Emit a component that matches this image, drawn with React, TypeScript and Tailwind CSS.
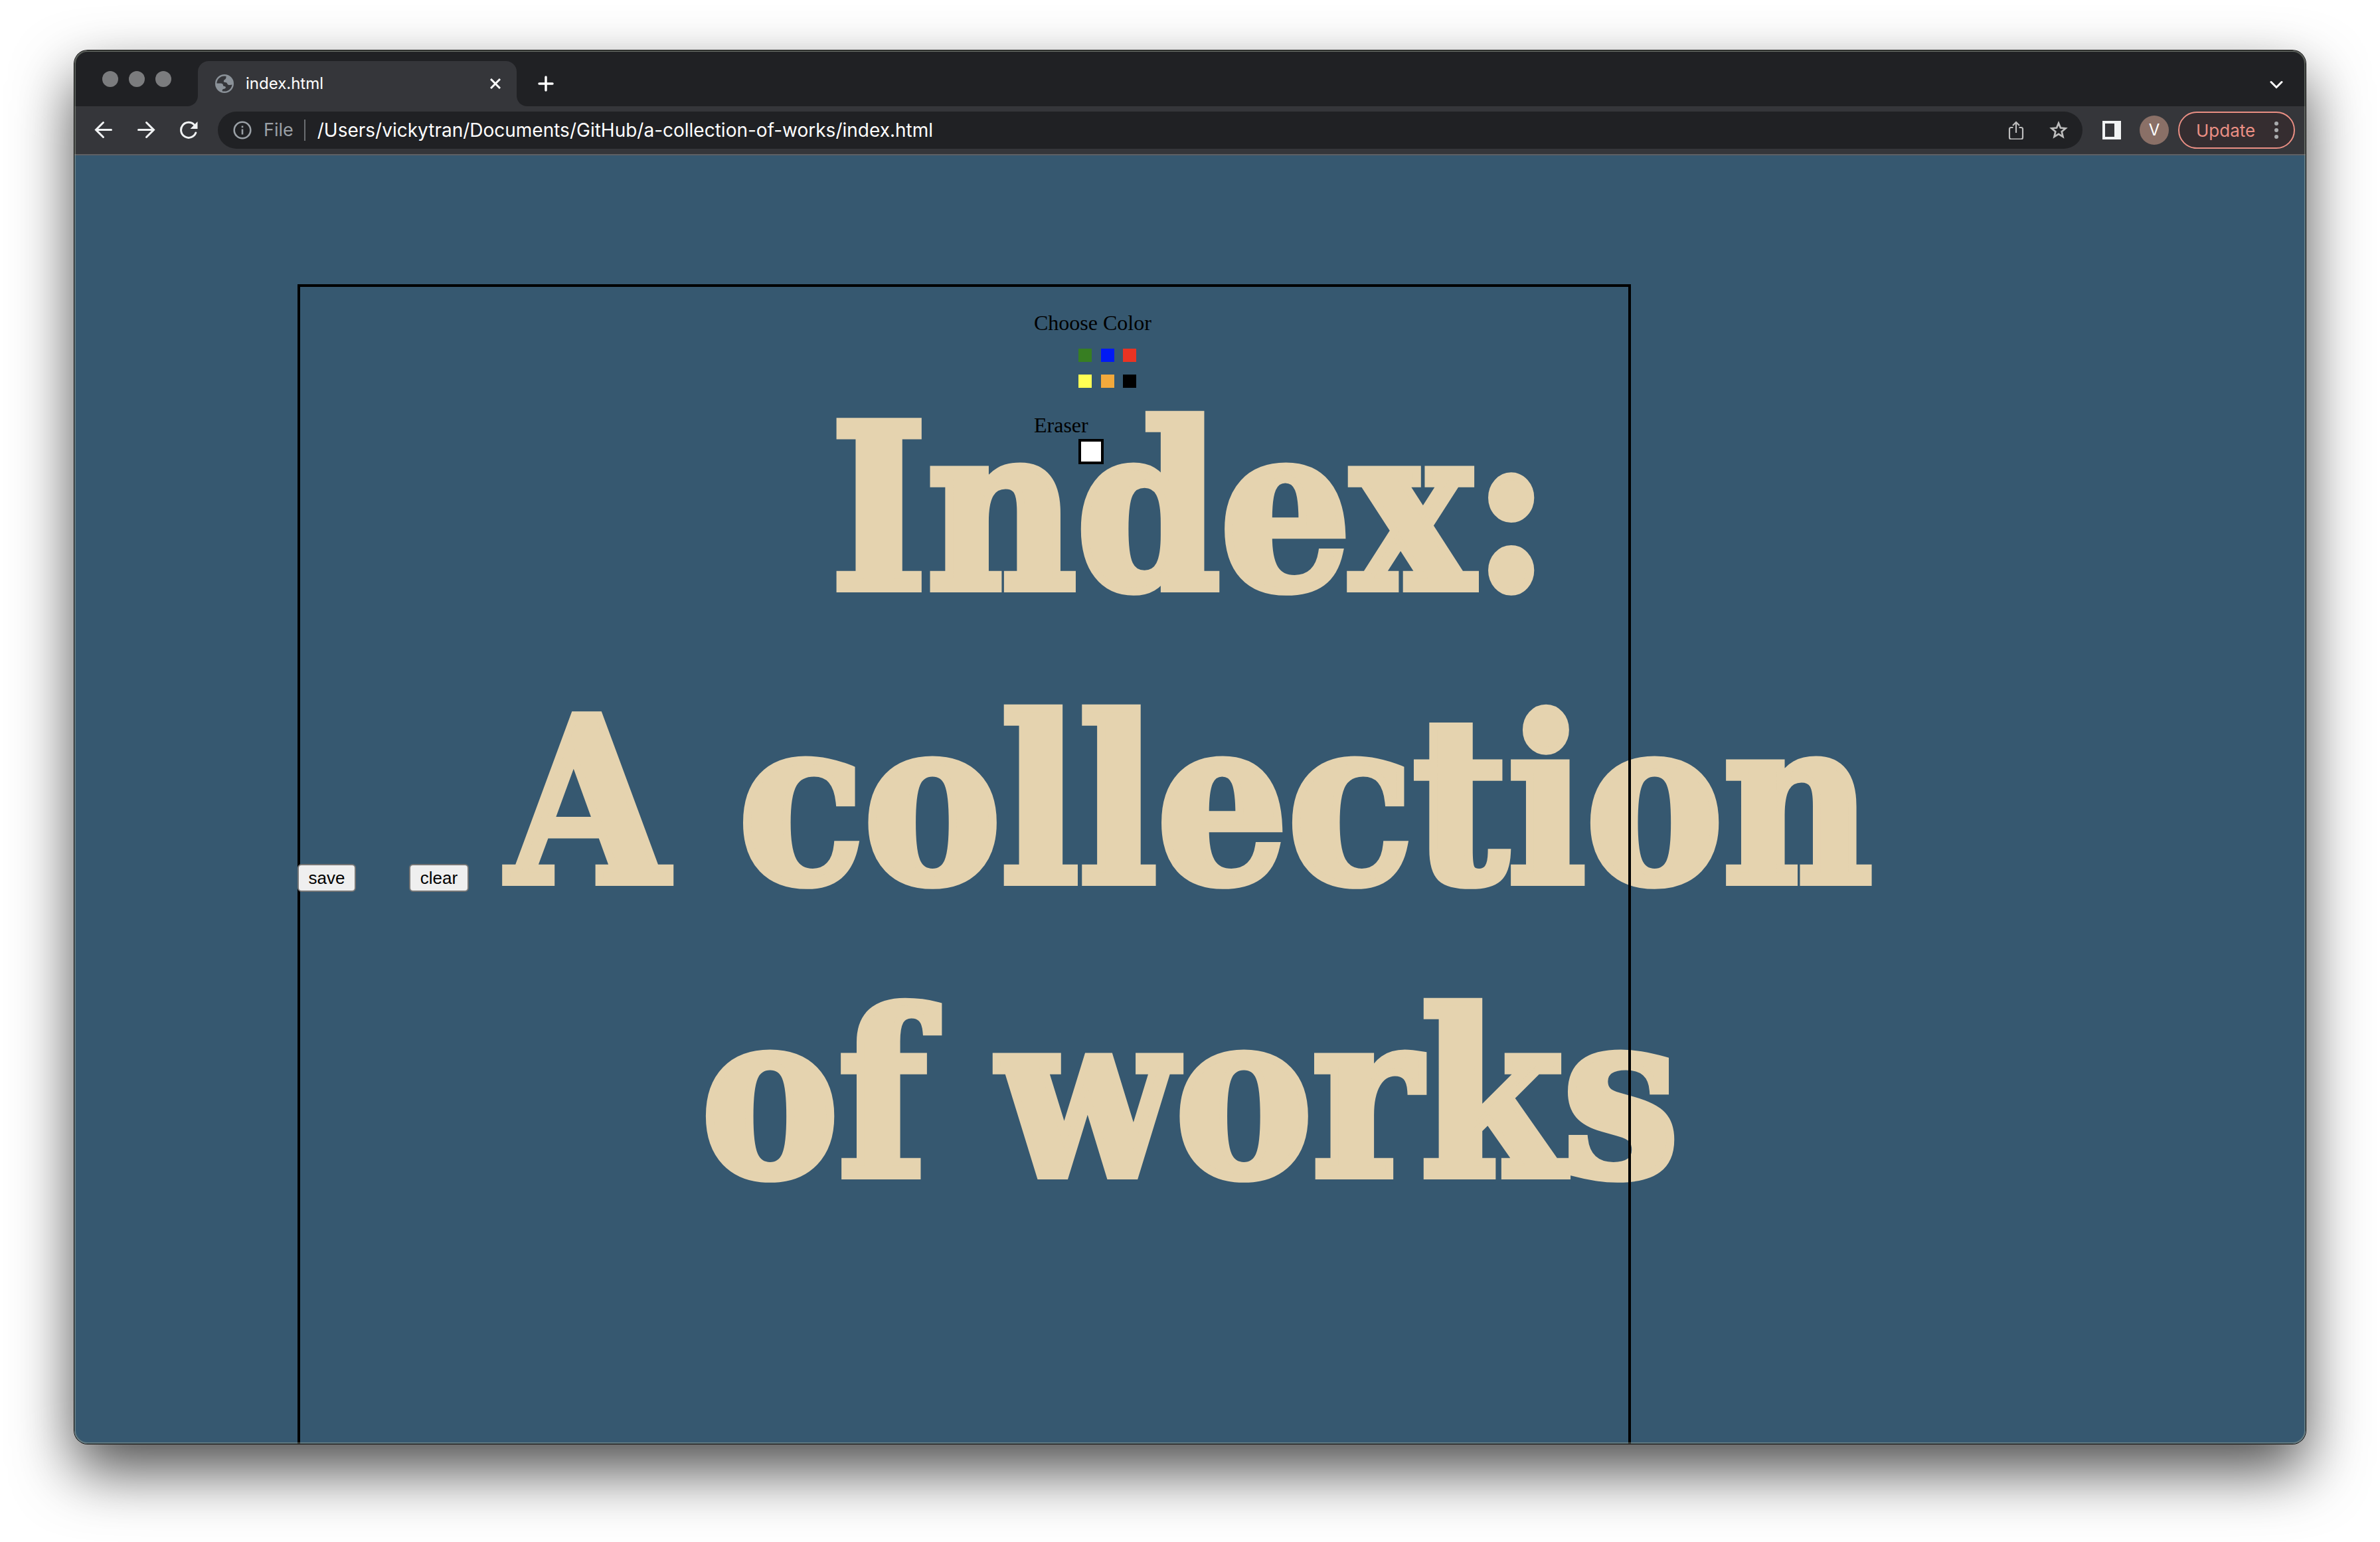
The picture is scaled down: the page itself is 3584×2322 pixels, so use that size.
import React from "react";

const swatches = [
  { name: "green", cls: "bg-[#377e22]" },
  { name: "blue", cls: "bg-[#001af5]" },
  { name: "red", cls: "bg-[#ea3323]" },
  { name: "yellow", cls: "bg-[#ffff54]" },
  { name: "orange", cls: "bg-[#f2a93c]" },
  { name: "black", cls: "bg-black" },
];

function GlobeIcon() {
  return (
    <svg viewBox="0 0 28 28" className="size-7 shrink-0" fill="#8b9299" aria-hidden="true">
      <circle cx="14" cy="14" r="12.8" fill="none" stroke="#8b9299" strokeWidth="2.4" />
      <path d="M16.500 2.500C24 3.500 27 9 26.500 15.500L23.500 15.800C21.500 16.500 18.500 16 18 13.500C17.800 12 15.500 12.500 13.800 11.800C12.300 11.200 12.600 9 14 8.200C15.500 7.300 16.800 6.500 16.500 2.500z" />
      <path d="M1.500 13.500H8.500C10.500 13.500 12 14.800 12 16.500C12 17.500 12.800 17.800 14.500 17.900C16.200 18.100 16.400 20.500 15 21.300C13.500 22.100 11.200 21.800 10.800 23.500L10.500 26C5 24.500 1.500 19.500 1.500 13.500z" />
    </svg>
  );
}

function TabStrip() {
  return (
    <header className="flex h-[84px] items-end bg-[#202124]">
      <div className="flex h-[84px] items-center gap-4 pt-0.5 pr-6 pl-[42px]">
        <span className="size-6 rounded-full bg-[#7b7c7e]" />
        <span className="size-6 rounded-full bg-[#7b7c7e]" />
        <span className="size-6 rounded-full bg-[#7b7c7e]" />
      </div>
      <div className="flex items-end">
        <svg viewBox="0 0 16 16" className="size-4" aria-hidden="true">
          <path d="M16 0v16H0C9 16 16 9 16 0z" fill="#35363a" />
        </svg>
        <div className="flex h-[68px] w-[480px] items-center rounded-t-2xl bg-[#35363a] pr-6 pl-[26px]">
          <GlobeIcon />
          <span className="ml-[18px] flex-1 text-2xl text-white">index.html</span>
          <button aria-label="Close tab" className="py-2">
            <svg viewBox="0 0 16 16" className="size-4" fill="none" stroke="#fff" strokeWidth="3">
              <path d="M1 1l14 14M15 1L1 15" />
            </svg>
          </button>
        </div>
        <svg viewBox="0 0 16 16" className="size-4" aria-hidden="true">
          <path d="M0 0v16h16C7 16 0 9 0 0z" fill="#35363a" />
        </svg>
      </div>
      <button aria-label="New tab" className="mb-[22px] ml-4">
        <svg viewBox="0 0 24 24" className="size-6" fill="none" stroke="#fff" strokeWidth="3.500" strokeLinecap="round">
          <path d="M12 2v20M2 12h20" />
        </svg>
      </button>
      <button aria-label="Search tabs" className="mr-[34px] mb-[23px] ml-auto">
        <svg viewBox="0 0 20 20" className="size-5" fill="none" stroke="#fff" strokeWidth="3" strokeLinecap="round">
          <path d="M2 6.500l8 8 8-8" />
        </svg>
      </button>
    </header>
  );
}

function Toolbar() {
  return (
    <nav className="flex h-[74px] items-center border-b-2 border-[#5e5f63] bg-[#35363a] pr-4 pl-[30px]">
      <div className="flex items-center gap-9">
        <button aria-label="Back">
          <svg viewBox="0 0 28 28" className="size-7" fill="none" stroke="#f1f3f4" strokeWidth="3" strokeLinecap="round">
            <path d="M25.500 13.500H3M13.500 2.500L2.500 13.500 13.500 24.500" />
          </svg>
        </button>
        <button aria-label="Forward">
          <svg viewBox="0 0 28 28" className="size-7" fill="none" stroke="#f1f3f4" strokeWidth="3" strokeLinecap="round">
            <path d="M2.500 13.500h22.500M14.500 2.500l11 11-11 11" />
          </svg>
        </button>
        <button aria-label="Reload">
          <svg viewBox="0 0 28 28" className="size-7" fill="none" stroke="#f1f3f4" strokeWidth="3" strokeLinecap="round">
            <path d="M24.800 18A11.500 11.500 0 1 1 22.500 6" />
            <path d="M27.500 1v11h-11z" fill="#f1f3f4" stroke="none" />
          </svg>
        </button>
      </div>
      <div className="ml-[30px] flex h-14 flex-1 items-center rounded-full bg-[#202124] pr-[22px] pl-[23px]">
        <svg viewBox="0 0 28 28" className="size-7 shrink-0" fill="none" stroke="#9aa0a6" strokeWidth="2.600" aria-hidden="true">
          <circle cx="14" cy="14" r="12.300" />
          <path d="M14 12.500V20.500M14 7.500v2.800" />
        </svg>
        <span className="ml-[18px] text-[27px] text-[#9aa0a6]">File</span>
        <span className="ml-4 h-8 w-0.5 bg-[#6b6e72]" />
        <input
          aria-label="Address"
          className="ml-[18px] min-w-0 flex-1 bg-transparent text-[28px] text-white outline-none"
          defaultValue="/Users/vickytran/Documents/GitHub/a-collection-of-works/index.html"
        />
        <div className="flex items-center gap-9">
          <button aria-label="Share">
            <svg viewBox="0 0 28 28" className="size-7" fill="none" stroke="#bdbdbd" strokeWidth="2.200">
              <path d="M9.500 10H6.500a2.500 2.500 0 0 0-2.500 2.500V25a2.500 2.500 0 0 0 2.500 2.500h15A2.500 2.500 0 0 0 24 25V12.500a2.500 2.500 0 0 0-2.500-2.500H18.500M14 18V2M9 7l5-5 5 5" />
            </svg>
          </button>
          <button aria-label="Bookmark">
            <svg viewBox="0 0 28 28" className="size-7" fill="none" stroke="#bdbdbd" strokeWidth="2.700">
              <path d="M14 3.500l2.900 7 7.600.7-5.800 5 1.800 7.600-6.500-4-6.500 4 1.800-7.600-5.800-5 7.600-.7z" />
            </svg>
          </button>
        </div>
      </div>
      <button aria-label="Side panel" className="ml-[30px]">
        <svg viewBox="0 0 28 28" className="size-7">
          <path fill="#f1f3f4" fillRule="evenodd" d="M0 0h28v28H0zM4 4v20h14V4z" />
        </svg>
      </button>
      <button className="ml-7 size-11 rounded-full bg-[#8a7067] text-2xl text-white">V</button>
      <button className="ml-[14px] flex h-14 w-44 items-center justify-between rounded-full border-2 border-[#ea8f84] bg-[#352d30] pr-[23px] pl-[25px] text-[26px] text-[#ea8f84]">
        Update
        <svg viewBox="0 0 6 28" className="h-7 w-1.5" fill="#a9abad" aria-hidden="true">
          <circle cx="3" cy="4" r="3" />
          <circle cx="3" cy="14" r="3" />
          <circle cx="3" cy="24" r="3" />
        </svg>
      </button>
    </nav>
  );
}

function DrawingBoard() {
  return (
    <section
      aria-label="Drawing board"
      className="absolute top-[194px] bottom-0 left-[336px] w-[2008px] border-4 border-b-0 border-black font-['Liberation_Serif',serif] text-[32px] leading-9 text-black"
    >
      <div className="ml-[1105px] pt-9">
        <p>Choose Color</p>
        <div className="mt-[21px] ml-[67px] grid w-[87px] grid-cols-3 gap-x-[14px] gap-y-[19px]">
          {swatches.map((s) => (
            <button key={s.name} aria-label={s.name} className={`size-5 ${s.cls}`} />
          ))}
        </div>
        <p className="mt-[38px]">Eraser</p>
        <button aria-label="Eraser" className="mt-[3px] ml-[67px] block size-[38px] border-4 border-black bg-white" />
      </div>
      <div className="-ml-1 mt-[602px] flex gap-20 font-['Liberation_Sans',sans-serif] text-[26px] leading-8">
        <button className="h-[42px] w-[88px] rounded-md border-2 border-[#767676] bg-[#efefef]">save</button>
        <button className="h-[42px] w-[90px] rounded-md border-2 border-[#767676] bg-[#efefef]">clear</button>
      </div>
    </section>
  );
}

export default function App() {
  return (
    <div className="flex h-screen flex-col bg-white px-28 pt-[76px] pb-[148px] font-[Inter,sans-serif]">
      <div className="relative flex min-h-0 flex-1 flex-col overflow-hidden rounded-[20px] shadow-[0_0_0_1px_#000,0_40px_90px_rgba(0,0,0,0.7)]">
        <TabStrip />
        <Toolbar />
        <main className="relative min-h-0 flex-1 overflow-hidden bg-[#365870]">
          <h1 className="pt-[310px] text-center font-['DejaVu_Serif_Condensed','DejaVu_Serif',serif] text-[344px] leading-[442px] font-bold text-[#e5d3af] [-webkit-text-stroke:12px_#e5d3af]">
            Index:
            <br />A collection
            <br />
            of works
          </h1>
          <DrawingBoard />
        </main>
        <div className="pointer-events-none absolute inset-0 rounded-[20px] border-2 border-[#a0a89a]/45" />
      </div>
    </div>
  );
}
